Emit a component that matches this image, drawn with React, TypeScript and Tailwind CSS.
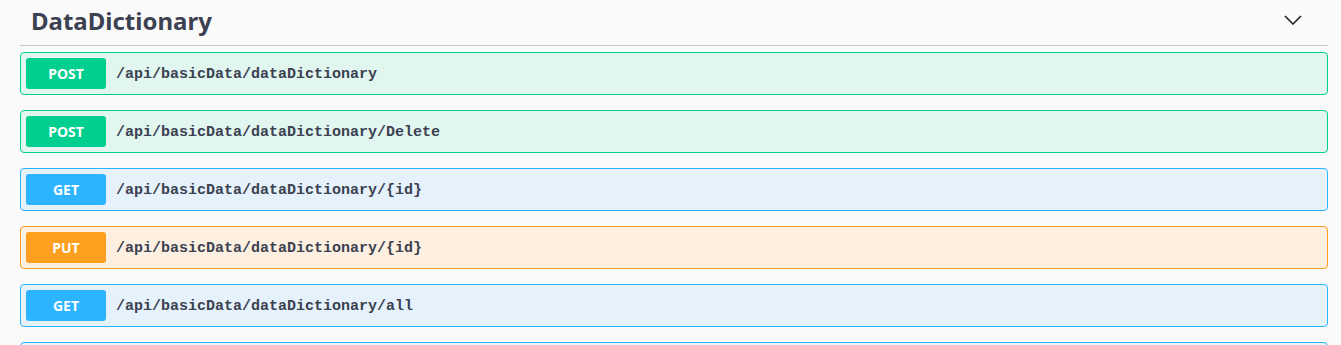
const ops = [
  { method: "POST", path: "/api/basicData/dataDictionary" },
  { method: "POST", path: "/api/basicData/dataDictionary/Delete" },
  { method: "GET", path: "/api/basicData/dataDictionary/{id}" },
  { method: "PUT", path: "/api/basicData/dataDictionary/{id}" },
  { method: "GET", path: "/api/basicData/dataDictionary/all" },
];

const styles: Record<string, { box: string; badge: string }> = {
  POST: { box: "border-[#00cf8f] bg-[#e0f6ef]", badge: "bg-[#00cf8f]" },
  GET: { box: "border-[#2db4ff] bg-[#e5f2fb]", badge: "bg-[#2db4ff]" },
  PUT: { box: "border-[#ff9f1f] bg-[#fdf0e1]", badge: "bg-[#ff9f1f]" },
};

export default function App() {
  return (
    <div className="h-[345px] overflow-hidden bg-[#fafafa]">
      <div className="ml-[20px] w-[1308px]">
        {/* Tag header */}
        <div className="flex h-[46px] items-center justify-between border-b border-[#c4c6cb] pl-[11px] pr-[26px]">
          <h3 className="mb-[4px] font-['Noto_Sans',sans-serif] text-[24px] font-bold leading-none text-[#3b4151]">
            DataDictionary
          </h3>
          <svg width="18" height="10" viewBox="0 0 18 10" className="mb-[5px]">
            <path d="M1 1l8 8 8-8" fill="none" stroke="#222" strokeWidth="1.6" />
          </svg>
        </div>

        {/* Operations */}
        <div className="mt-[6px] flex flex-col gap-[15px]">
          {ops.map((op, i) => (
            <div
              key={i}
              className={`flex h-[43px] items-center rounded-[4px] border px-[5px] ${styles[op.method].box}`}
            >
              <span
                className={`flex h-[31px] w-[80px] items-center justify-center rounded-[3px] font-['Noto_Sans',sans-serif] text-[14px] font-bold text-white ${styles[op.method].badge}`}
              >
                {op.method}
              </span>
              <span className="ml-[10px] pt-[4px] font-['Liberation_Mono',monospace] text-[15px] font-bold text-[#3b4151]">
                {op.path}
              </span>
            </div>
          ))}
          <div className="h-[43px] rounded-[4px] border border-[#2db4ff] bg-[#e5f2fb]" />
        </div>
      </div>
    </div>
  );
}
